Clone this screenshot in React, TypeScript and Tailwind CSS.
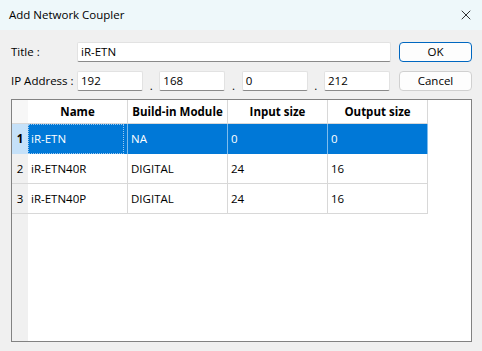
import { X } from 'lucide-react';

const rows = [
  { n: 1, name: 'iR-ETN', mod: 'NA', inp: '0', out: '0' },
  { n: 2, name: 'iR-ETN40R', mod: 'DIGITAL', inp: '24', out: '16' },
  { n: 3, name: 'iR-ETN40P', mod: 'DIGITAL', inp: '24', out: '16' },
];

const ip = ['192', '168', '0', '212'];

function Field({ value, className }: { value: string; className?: string }) {
  return (
    <div
      className={`h-[20px] bg-white border border-[#e2e2e2] border-b-[#8a8a8a] rounded-[2px] flex items-center pl-[3px] ${className ?? ''}`}
    >
      {value}
    </div>
  );
}

export default function App() {
  return (
    <div
      className="w-[482px] h-[351px] bg-[#f0f0f0] flex flex-col text-[11.5px] text-black overflow-hidden"
      style={{ fontFamily: '"Segoe UI", "Open Sans", "Liberation Sans", sans-serif' }}
    >
      {/* Title bar */}
      <div className="h-[30px] shrink-0 bg-[#eef8fa] flex items-center justify-between pl-[9px] pr-[8px]">
        <span className="text-[11.5px]">Add Network Coupler</span>
        <X size={16} strokeWidth={1.2} className="text-black" />
      </div>

      <div className="flex-1 flex flex-col pl-[11px] pr-[10px] pt-[12px] pb-[9px]">
        {/* Title row */}
        <div className="flex items-center h-[20px]">
          <span className="w-[66px] shrink-0">Title :</span>
          <Field value="iR-ETN" className="flex-1" />
          <button className="ml-[8px] w-[73px] h-[20px] bg-[#fdfdfd] border border-[#0067c0] rounded-[4px] text-[11.5px]">
            OK
          </button>
        </div>

        {/* IP row */}
        <div className="flex items-center h-[20px] mt-[9px]">
          <span className="w-[66px] shrink-0">IP Address :</span>
          <div className="flex-1 flex items-center">
            {ip.map((v, i) => (
              <div key={i} className="flex items-center flex-1 last:flex-none last:w-[67px]">
                <Field value={v} className="w-[66px]" />
                {i < 3 && <span className="flex-1 text-center self-end leading-[14px] -mb-[2px]">.</span>}
              </div>
            ))}
          </div>
          <button className="ml-[8px] w-[73px] h-[20px] bg-[#fdfdfd] border border-[#d0d0d0] rounded-[4px] text-[11.5px]">
            Cancel
          </button>
        </div>

        {/* Grid */}
        <div className="mt-[8px] flex-1 bg-white border border-[#828282] flex overflow-hidden">
          <div className="flex flex-col">
            <div className="grid grid-cols-[16px_100px_100px_100px_100px]">
              <div className="h-[24px] bg-[#f7f7f7] border-b border-[#d8d8d8]" />
              {['Name', 'Build-in Module', 'Input size', 'Output size'].map((h) => (
                <div
                  key={h}
                  className="h-[24px] border-r border-b border-[#d8d8d8] flex items-center justify-center font-bold"
                >
                  {h}
                </div>
              ))}
              {rows.map((r) => {
                const sel = r.n === 1;
                const cell = sel
                  ? 'bg-[#0078d7] text-white border-r border-[#7fbcec]'
                  : 'border-r border-b border-[#d8d8d8]';
                return (
                  <div key={r.n} className="contents">
                    <div
                      className={`h-[30px] flex items-center justify-center ${
                        sel ? 'bg-[#c5e1f9] font-bold' : 'bg-[#f0f0f0] border-b border-[#d8d8d8]'
                      }`}
                    >
                      {r.n}
                    </div>
                    <div className={`h-[30px] flex items-center pl-[3px] ${cell}`}>
                      <span
                        className={
                          sel
                            ? 'w-full h-full flex items-center outline outline-1 outline-dotted outline-[#9cc7ee] -outline-offset-1 -ml-[3px] pl-[3px]'
                            : ''
                        }
                      >
                        {r.name}
                      </span>
                    </div>
                    <div className={`h-[30px] flex items-center pl-[3px] ${cell}`}>{r.mod}</div>
                    <div className={`h-[30px] flex items-center pl-[3px] ${cell}`}>{r.inp}</div>
                    <div className={`h-[30px] flex items-center pl-[3px] ${cell}`}>{r.out}</div>
                  </div>
                );
              })}
            </div>
            <div className="flex-1 w-[16px] bg-[#f0f0f0]" />
          </div>
        </div>
      </div>
    </div>
  );
}
